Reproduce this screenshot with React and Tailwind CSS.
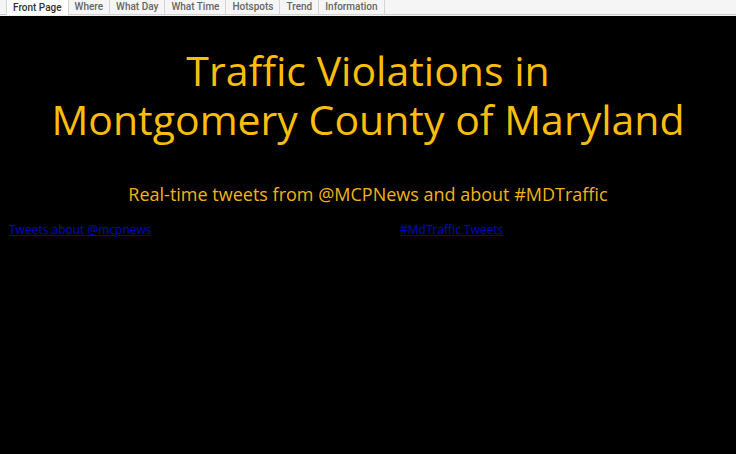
const tabs = ['Front Page', 'Where', 'What Day', 'What Time', 'Hotspots', 'Trend', 'Information'];

export default function App() {
  return (
    <div className="flex min-h-screen flex-col bg-black font-['Open_Sans',sans-serif]">
      <nav aria-label="Sheets" className="flex h-4 border-b border-[#f0f0f0] bg-[#f5f5f5] font-[Roboto,sans-serif]">
        <div className="w-1.5 border-b border-[#cccccc]" />
        {tabs.map((tab, i) => (
          <button
            key={tab}
            type="button"
            className={`border-r border-[#d4d4d4] px-1.5 text-[10px] leading-[14px] font-medium whitespace-nowrap ${
              i === 0 ? 'border-l bg-white text-[#333333]' : 'border-b text-[#666666]'
            }`}
          >
            {tab}
          </button>
        ))}
        <div className="flex-1 border-b border-[#cccccc]" />
      </nav>
      <main className="flex-1 px-[9px] pt-[30px]">
        <h1 className="text-center text-[41px] leading-[49px] text-[#fcbd0c]">
          Traffic Violations in
          <br />
          Montgomery County of Maryland
        </h1>
        <p className="mt-[38px] text-center text-[18px] leading-6 text-[#f0b418]">
          Real-time tweets from @MCPNews and about #MDTraffic
        </p>
        <div className="mt-4 grid grid-cols-[391px_1fr] text-[12px] leading-4 text-[#0000c8]">
          <div><a href="#mcpnews" className="underline">Tweets about @mcpnews</a></div>
          <div><a href="#mdtraffic" className="underline">#MdTraffic Tweets</a></div>
        </div>
      </main>
    </div>
  );
}
